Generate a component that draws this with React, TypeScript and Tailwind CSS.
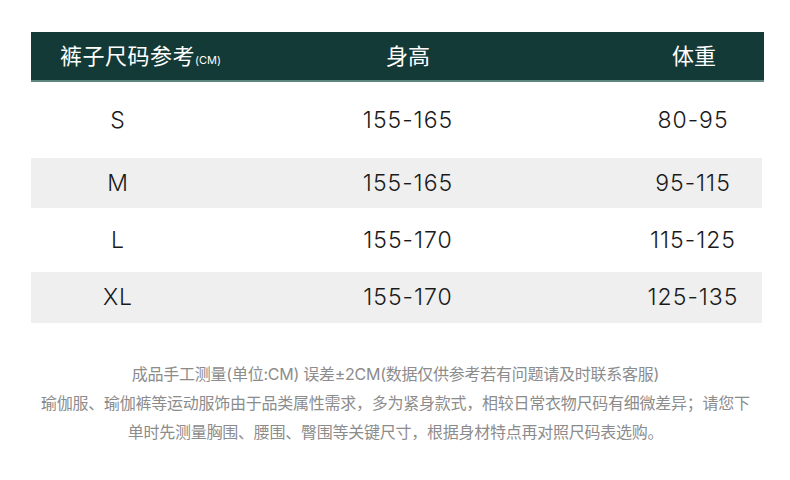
import React from 'react'

const rows = [
  { size: 'S', height: '155-165', weight: '80-95', h: 'h-[76px]', gray: false },
  { size: 'M', height: '155-165', weight: '95-115', h: 'h-[50px]', gray: true },
  { size: 'L', height: '155-170', weight: '115-125', h: 'h-[64px]', gray: false },
  { size: 'XL', height: '155-170', weight: '125-135', h: 'h-[51px]', gray: true },
]

const App = () => {
  return (
    <div
      className="w-[790px] h-[480px] bg-white overflow-hidden pt-[32px] pl-[31px]"
      style={{ fontFamily: 'Inter, "Noto Sans CJK SC", sans-serif' }}
    >
      {/* header */}
      <div className="w-[733px] h-[50px] bg-[#143a37] border-b-2 border-[#5f8580] grid grid-cols-[174px_406px_1fr] items-center text-white">
        <div className="pl-[29px] whitespace-nowrap text-[22px] tracking-[0.5px]">
          裤子尺码参考<span className="text-[11px] tracking-normal">(CM)</span>
        </div>
        <div className="text-center text-[22px]">身高</div>
        <div className="text-center pl-[13px] text-[22px]">体重</div>
      </div>

      {/* rows */}
      {rows.map((r) => (
        <div
          key={r.size}
          className={`w-[731px] ${r.h} ${r.gray ? 'bg-[#efefef]' : 'bg-white'} grid grid-cols-[174px_406px_1fr] items-center text-[#1a1a1a] text-[23px] font-light tracking-[1px]`}
        >
          <div className="text-center">{r.size}</div>
          <div className="text-center">{r.height}</div>
          <div className="text-center pl-[13px]">{r.weight}</div>
        </div>
      ))}

      {/* notes */}
      <div className="w-[729px] mt-[37px] flex flex-col items-center text-[#8c8c8c] text-[16px] leading-[29px] tracking-[-0.25px]">
        <p>成品手工测量(单位:CM) 误差±2CM(数据仅供参考若有问题请及时联系客服)</p>
        <p className="whitespace-nowrap">瑜伽服、瑜伽裤等运动服饰由于品类属性需求，多为紧身款式，相较日常衣物尺码有细微差异；请您下</p>
        <p>单时先测量胸围、腰围、臀围等关键尺寸，根据身材特点再对照尺码表选购。</p>
      </div>
    </div>
  )
}

export default App
